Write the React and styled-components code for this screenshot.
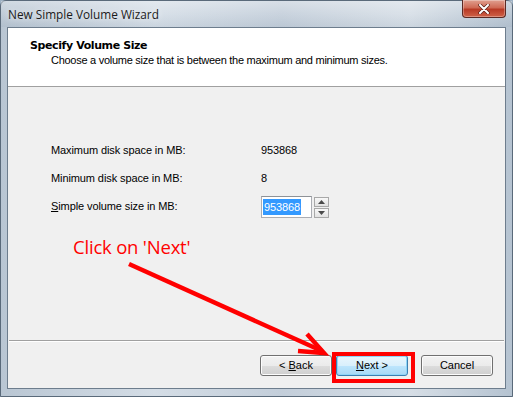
import React from "react";
import styled, { createGlobalStyle } from "styled-components";

const Global = createGlobalStyle`
  html, body { margin: 0; padding: 0; background: #9fb2c4; }
  body { width: 513px; height: 397px; overflow: hidden; }
`;

const Window = styled.div`
  position: relative;
  width: 513px;
  height: 397px;
  box-sizing: border-box;
  display: flex;
  flex-direction: column;
  background: linear-gradient(90deg, #b9c6d3 0%, #d4dde6 30%, #c3ceda 55%, #d6dee6 80%, #b5c3d1 100%);
  border: 1px solid #5a6a7a;
  border-radius: 6px 6px 0 0;
  font-family: "Liberation Sans", Arial, sans-serif;
`;

const TitleBar = styled.div`
  height: 26px;
  display: flex;
  align-items: flex-start;
  justify-content: space-between;
  padding-left: 7px;
  background: linear-gradient(180deg, rgba(255,255,255,0.35) 0%, rgba(255,255,255,0.1) 50%, rgba(120,140,160,0.1) 100%);
`;

const TitleText = styled.span`
  margin-top: 5px;
  font-family: "Open Sans", "Noto Sans", sans-serif;
  font-size: 11.8px;
  color: #1a1a1a;
  text-shadow: 0 0 6px rgba(255,255,255,0.9);
`;

const CloseButton = styled.div`
  width: 42px;
  height: 17px;
  margin-right: 6px;
  margin-top: -1px;
  border: 1px solid #5b2a24;
  border-top: none;
  border-radius: 0 0 4px 4px;
  background: linear-gradient(180deg, #e0a090 0%, #cf6a55 45%, #b83a25 55%, #cf6248 100%);
  display: flex;
  align-items: center;
  justify-content: center;
  box-shadow: inset 0 0 0 1px rgba(255,255,255,0.3);
`;

const Client = styled.div`
  flex: 1;
  margin: 0 6px 7px 6px;
  border: 1px solid #6d7d8d;
  display: flex;
  flex-direction: column;
  background: #f0f0f0;
`;

const Header = styled.div`
  height: 59px;
  background: #ffffff;
  border-bottom: 1px solid #a0a0a0;
  box-sizing: border-box;
  padding: 11px 0 0 22px;
`;

const HeaderTitle = styled.div`
  font-family: "DejaVu Sans", Verdana, sans-serif;
  font-weight: bold;
  font-size: 11px;
  color: #000;
  letter-spacing: -0.4px;
`;

const HeaderSub = styled.div`
  margin-top: 2px;
  padding-left: 21px;
  font-size: 11px;
  letter-spacing: -0.27px;
  color: #000;
`;

const Body = styled.div`
  flex: 1;
  padding: 49px 0 0 43px;
  display: grid;
  grid-template-columns: 210px auto;
  grid-auto-rows: 28px;
  align-content: start;
  font-size: 11px;
  letter-spacing: -0.1px;
  color: #000;
`;

const Label = styled.div`
  display: flex;
  align-items: center;
`;

const Value = styled.div`
  display: flex;
  align-items: center;
`;

const Spin = styled.div`
  display: flex;
  align-items: center;
  gap: 2px;
  margin-top: 2px;
`;

const SpinField = styled.div`
  width: 51px;
  height: 22px;
  box-sizing: border-box;
  border: 1px solid #abadb3;
  border-top-color: #8e9297;
  background: #fff;
  padding: 2px 1px;
  display: flex;
`;

const Selected = styled.span`
  background: #3399ff;
  color: #fff;
  padding: 0 1px;
  line-height: 16px;
`;

const SpinButtons = styled.div`
  display: flex;
  flex-direction: column;
  gap: 1px;
`;

const SpinBtn = styled.div`
  width: 15px;
  height: 10px;
  box-sizing: border-box;
  border: 1px solid #a8a8a8;
  background: linear-gradient(180deg, #f8f8f8, #e2e2e2);
  display: flex;
  align-items: center;
  justify-content: center;
`;

const Separator = styled.div`
  height: 1px;
  margin: 0 1px;
  background: #a0a0a0;
  border-bottom: 1px solid #fff;
`;

const Footer = styled.div`
  height: 46px;
  display: flex;
  align-items: center;
  justify-content: flex-end;
  padding-right: 12px;
  gap: 4px;
`;

const Button = styled.div`
  width: 72px;
  height: 21px;
  box-sizing: border-box;
  border: 1px solid ${(p) => (p.$default ? "#3c7fb1" : "#707070")};
  border-radius: 3px;
  background: ${(p) =>
    p.$default
      ? "linear-gradient(180deg, #eaf6fd 0%, #d9f0fc 50%, #bee6fd 51%, #a7d9f5 100%)"
      : "linear-gradient(180deg, #f2f2f2 0%, #ebebeb 50%, #dddddd 51%, #cfcfcf 100%)"};
  box-shadow: inset 0 0 0 1px ${(p) => (p.$default ? "#8fd6f7" : "#fcfcfc")};
  display: flex;
  align-items: center;
  justify-content: center;
  font-size: 11px;
  color: #000;
  margin-left: ${(p) => p.$gap || 0}px;
`;

const U = styled.span`
  text-decoration: underline;
`;

const Highlight = styled.div`
  position: absolute;
  left: 331px;
  top: 351px;
  width: 83px;
  height: 31px;
  box-sizing: border-box;
  border: 4px solid #ff0000;
  pointer-events: none;
`;

const Note = styled.div`
  position: absolute;
  left: 72px;
  top: 233px;
  font-family: "Open Sans", "Noto Sans", sans-serif;
  font-size: 18.5px;
  color: #ff0000;
  letter-spacing: -0.2px;
`;

const Arrow = styled.svg`
  position: absolute;
  left: 0;
  top: 0;
  pointer-events: none;
`;

export default function App() {
  return (
    <>
      <Global />
      <Window>
        <TitleBar>
          <TitleText>New Simple Volume Wizard</TitleText>
          <CloseButton>
            <svg width="12" height="10" viewBox="0 0 12 10">
              <path d="M2 1 L10 9 M10 1 L2 9" stroke="#5a2018" strokeWidth="3.4" strokeLinecap="round" />
              <path d="M2 1 L10 9 M10 1 L2 9" stroke="#ffffff" strokeWidth="2" strokeLinecap="round" />
            </svg>
          </CloseButton>
        </TitleBar>
        <Client>
          <Header>
            <HeaderTitle>Specify Volume Size</HeaderTitle>
            <HeaderSub>Choose a volume size that is between the maximum and minimum sizes.</HeaderSub>
          </Header>
          <Body>
            <Label>Maximum disk space in MB:</Label>
            <Value>953868</Value>
            <Label>Minimum disk space in MB:</Label>
            <Value>8</Value>
            <Label><span><U>S</U>imple volume size in MB:</span></Label>
            <Spin>
              <SpinField>
                <Selected>953868</Selected>
              </SpinField>
              <SpinButtons>
                <SpinBtn>
                  <svg width="7" height="4" viewBox="0 0 7 4"><path d="M0 4 L3.5 0 L7 4 Z" fill="#4a4a4a" /></svg>
                </SpinBtn>
                <SpinBtn>
                  <svg width="7" height="4" viewBox="0 0 7 4"><path d="M0 0 L3.5 4 L7 0 Z" fill="#4a4a4a" /></svg>
                </SpinBtn>
              </SpinButtons>
            </Spin>
          </Body>
          <Separator />
          <Footer>
            <Button><span>&lt; <U>B</U>ack</span></Button>
            <Button $default><span><U>N</U>ext &gt;</span></Button>
            <Button $gap={9}>Cancel</Button>
          </Footer>
        </Client>
        <Note>Click on 'Next'</Note>
        <Arrow width="513" height="397" viewBox="0 0 513 397">
          <path d="M128 263 L321 350" stroke="#ff0000" strokeWidth="4.5" fill="none" />
          <path d="M306 333 L323 352 L297 350" stroke="#ff0000" strokeWidth="4.5" fill="none" />
        </Arrow>
        <Highlight />
      </Window>
    </>
  );
}
